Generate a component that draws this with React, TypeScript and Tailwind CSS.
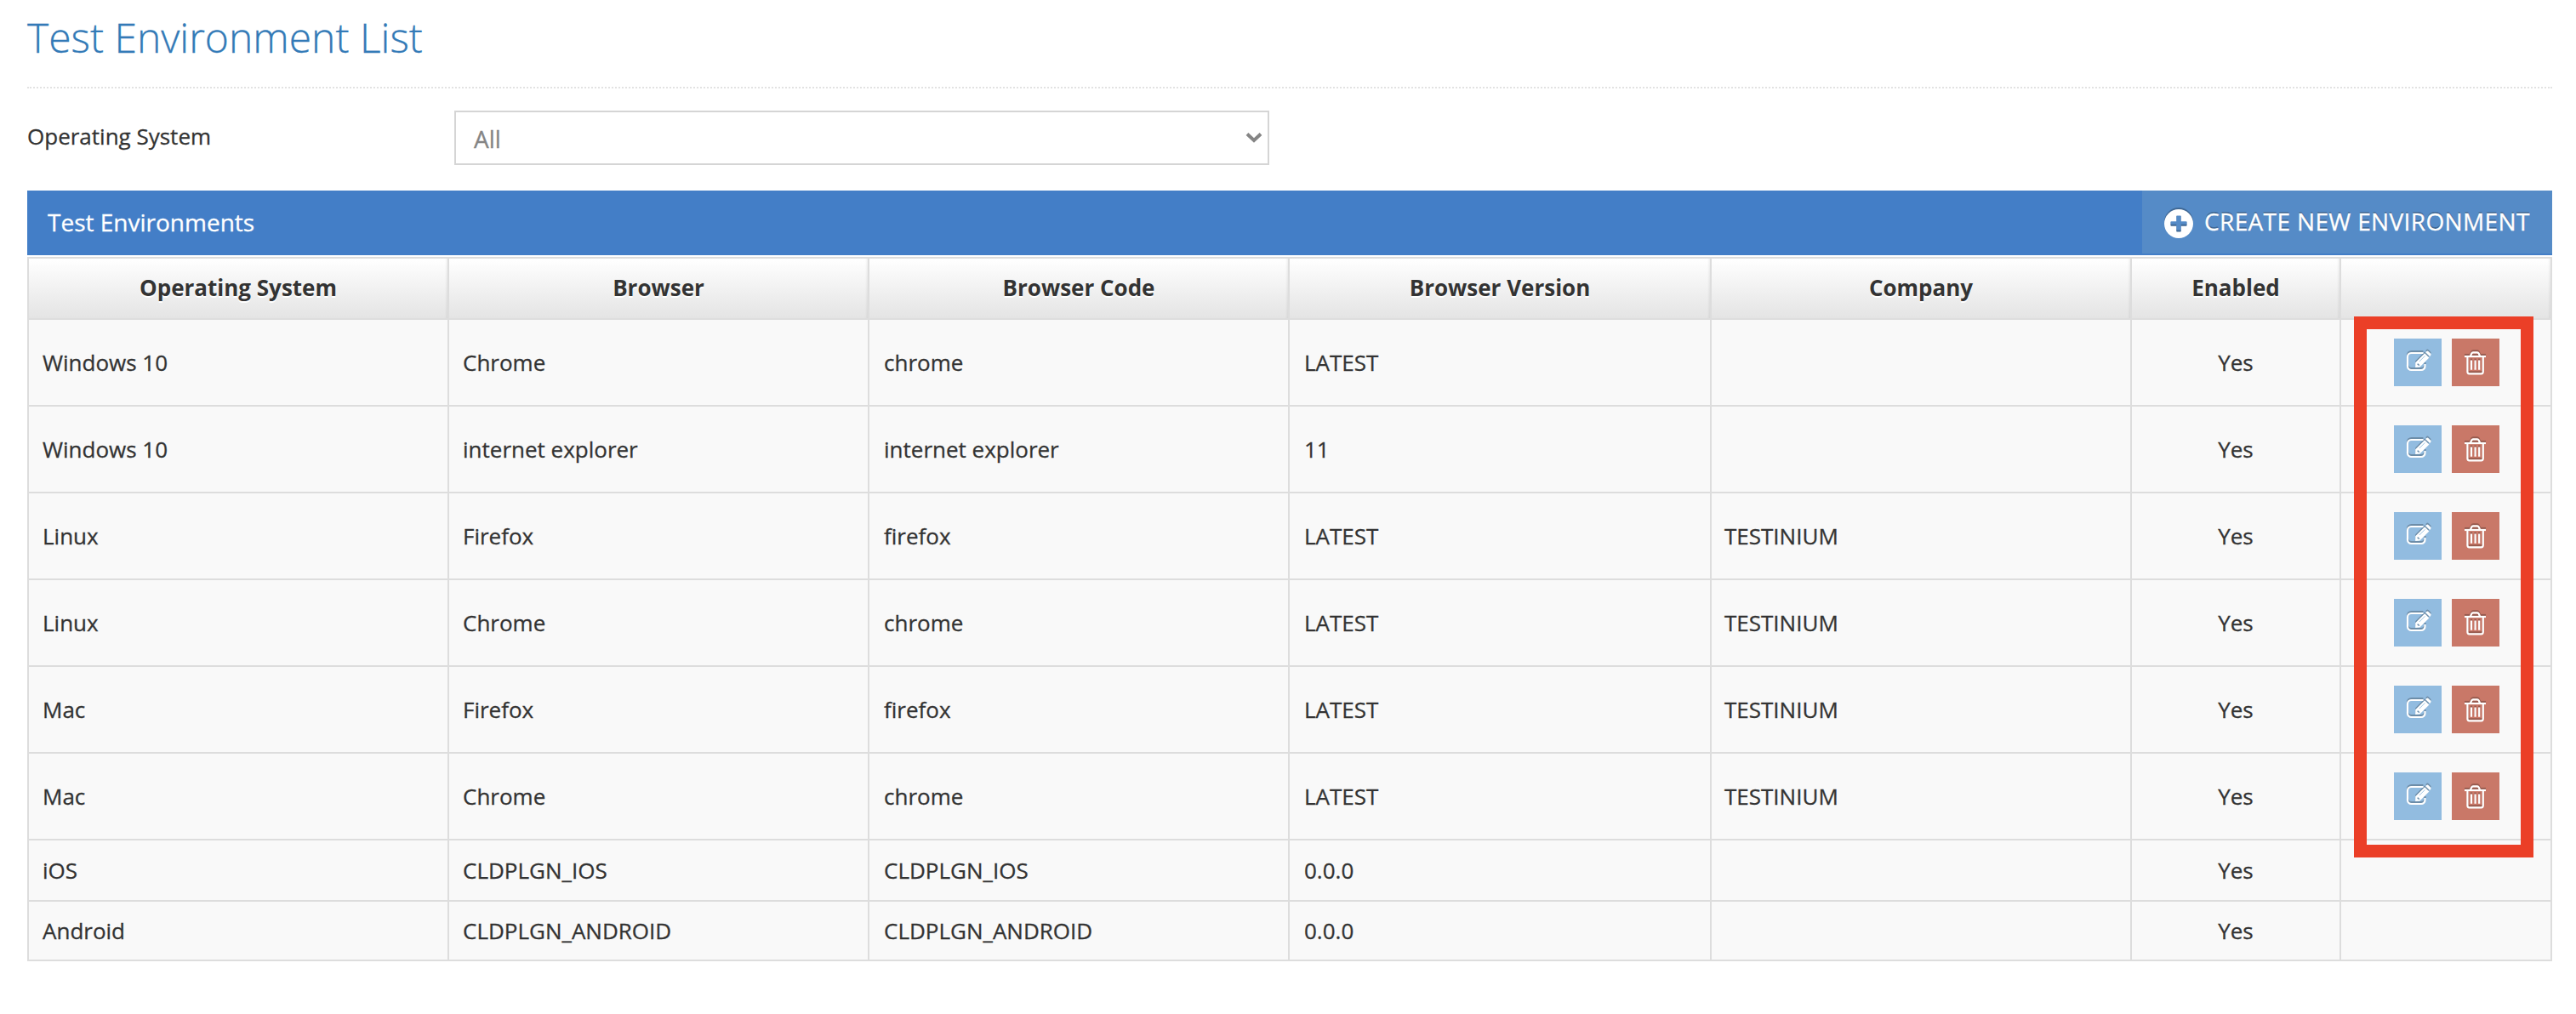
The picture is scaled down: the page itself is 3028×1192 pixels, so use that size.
import React from "react";

type Env = {
  os: string;
  browser: string;
  code: string;
  version: string;
  company: string;
  actions: boolean;
  height: string;
};

const TALL = "h-[102px]";

const environments: Env[] = [
  { os: "Windows 10", browser: "Chrome", code: "chrome", version: "LATEST", company: "", actions: true, height: TALL },
  { os: "Windows 10", browser: "internet explorer", code: "internet explorer", version: "11", company: "", actions: true, height: TALL },
  { os: "Linux", browser: "Firefox", code: "firefox", version: "LATEST", company: "TESTINIUM", actions: true, height: TALL },
  { os: "Linux", browser: "Chrome", code: "chrome", version: "LATEST", company: "TESTINIUM", actions: true, height: TALL },
  { os: "Mac", browser: "Firefox", code: "firefox", version: "LATEST", company: "TESTINIUM", actions: true, height: TALL },
  { os: "Mac", browser: "Chrome", code: "chrome", version: "LATEST", company: "TESTINIUM", actions: true, height: TALL },
  { os: "iOS", browser: "CLDPLGN_IOS", code: "CLDPLGN_IOS", version: "0.0.0", company: "", actions: false, height: "h-[72px]" },
  { os: "Android", browser: "CLDPLGN_ANDROID", code: "CLDPLGN_ANDROID", version: "0.0.0", company: "", actions: false, height: "h-[70px]" },
];

const headings = ["Operating System", "Browser", "Browser Code", "Browser Version", "Company", "Enabled", ""];

const iconShadow = "[filter:drop-shadow(0_-2px_0_rgba(0,0,0,0.25))]";

function EditIcon() {
  return (
    <svg viewBox="0 0 56 56" className={`size-14 ${iconShadow}`} fill="none">
      <path
        d="M34.5 17H20.5A4.5 4.5 0 0 0 16 21.500V32.500A4.500 4.500 0 0 0 20.500 37H32A4.500 4.500 0 0 0 36.500 32.500V30"
        stroke="#fff"
        strokeWidth="2.200"
      />
      <path
        fillRule="evenodd"
        fill="#fff"
        d="M25.200 34V28.200L36.200 17.200L41.400 22.400L30.400 33.400L25.200 34ZM28.200 29L30.600 31.400L29 32L27.200 30.200Z"
      />
      <path d="M29.800 27L36.500 20.300" stroke="#92bce0" strokeWidth="0.900" />
      <path d="M37.200 16.200L38.400 15Q39.400 14.200 40.400 15L43.200 17.800Q44 18.800 43.200 19.800L42.200 21Z" fill="#fff" />
    </svg>
  );
}

function TrashIcon() {
  return (
    <svg viewBox="0 0 56 56" className={`size-14 ${iconShadow}`} fill="none" stroke="#fff" strokeWidth="2.200">
      <path d="M15 21H40" />
      <path d="M22 20.500L23.300 17.400Q23.800 16.400 25 16.400H30Q31.200 16.400 31.700 17.400L33 20.500" />
      <path d="M18.400 21V38.800Q18.400 41.400 20.600 41.400H34.600Q36.800 41.400 36.800 38.800V21" />
      <path d="M23 25.500V36.800M27.600 25.500V36.800M32.200 25.500V36.800" />
    </svg>
  );
}

function PlusCircle() {
  return (
    <svg viewBox="0 0 34 34" className={`size-[34px] ${iconShadow}`}>
      <path
        fillRule="evenodd"
        fill="#fff"
        d="M17 0A17 17 0 1 1 17 34A17 17 0 1 1 17 0ZM15 7.400Q14.200 7.400 14.200 8.400V14.200H8.400Q7.400 14.200 7.400 15V19Q7.400 19.800 8.400 19.800H14.200V25.600Q14.200 26.600 15 26.600H19Q19.800 26.600 19.800 25.600V19.800H25.600Q26.600 19.800 26.600 19V15Q26.600 14.200 25.600 14.200H19.800V8.400Q19.800 7.400 19 7.400Z"
      />
    </svg>
  );
}

function Cell({ children, className = "pl-4" }: { children?: React.ReactNode; className?: string }) {
  return (
    <td className={`border-r-2 border-b-2 border-[#ddd] bg-[#f9f9f9] py-0 align-middle ${className}`}>
      {children}
    </td>
  );
}

export default function App() {
  return (
    <div className="h-[1192px] w-[3028px] overflow-hidden bg-white pr-7 pl-8 font-['Open_Sans',sans-serif] text-[26px] text-[#333] [-webkit-text-stroke:0.3px]">
      <header className="flex h-[104px] border-b-2 border-dotted border-[#e2e2e2]">
        <h1 className="pt-4 text-[48px] leading-[56px] font-light text-[#337ab7]">Test Environment List</h1>
      </header>

      <div className="mt-[26px] flex h-16">
        <label className="w-[502px] leading-[60px]">Operating System</label>
        <div className="flex h-16 w-[958px] items-center justify-between border-2 border-[#d5d5d5] pr-1.5 pl-[21px] text-[28px] text-[#858585]">
          <span className="pt-px">All</span>
          <svg viewBox="0 0 20 14" className="h-[14px] w-5" fill="none" stroke="#858585" strokeWidth="4">
            <path d="M2 2.500L10 10L18 2.500" />
          </svg>
        </div>
      </div>

      <section className="relative mt-[30px]">
        <div className="flex h-[76px] justify-between bg-[#437ec7] text-[28px] text-white">
          <h2 className="pl-6 leading-[74px]">Test Environments</h2>
          <button className="flex h-[74px] w-[482px] items-center bg-[#558bc7] pt-1 pl-[26px]">
            <PlusCircle />
            <span className="-mt-1.5 pl-[13px] tracking-[0.36px] whitespace-nowrap [text-shadow:0_-2px_0_rgba(0,0,0,0.25)]">
              CREATE NEW ENVIRONMENT
            </span>
          </button>
        </div>

        <table className="mt-0.5 w-[2968px] table-fixed border-separate border-spacing-0 border-t-2 border-l-2 border-[#ddd]">
          <colgroup>
            <col className="w-[494px]" />
            <col className="w-[494px]" />
            <col className="w-[494px]" />
            <col className="w-[496px]" />
            <col className="w-[494px]" />
            <col className="w-[246px]" />
            <col className="w-[248px]" />
          </colgroup>
          <thead>
            <tr className="h-[72px]">
              {headings.map((heading, i) => (
                <th
                  key={i}
                  className="border-r-2 border-b-2 border-[#ddd] bg-linear-to-b from-white to-[#e4e4e4] px-0 pt-0 pb-px text-center align-middle font-bold shadow-[inset_-3px_0_3px_-2px_rgba(0,0,0,0.08)] [-webkit-text-stroke:0] [text-shadow:0_2px_0_#fff]"
                >
                  {heading}
                </th>
              ))}
            </tr>
          </thead>
          <tbody>
            {environments.map((env, i) => (
              <tr key={i} className={env.height}>
                <Cell>{env.os}</Cell>
                <Cell>{env.browser}</Cell>
                <Cell className="pl-[17px]">{env.code}</Cell>
                <Cell className="pl-[17px]">{env.version}</Cell>
                <Cell className="pl-[15px]">{env.company}</Cell>
                <Cell className="text-center">Yes</Cell>
                <Cell className="pl-[62px]">
                  {env.actions && (
                    <div className="flex gap-3">
                      <button className="size-14 bg-[#92bce0]">
                        <EditIcon />
                      </button>
                      <button className="size-14 bg-[#c97868]">
                        <TrashIcon />
                      </button>
                    </div>
                  )}
                </Cell>
              </tr>
            ))}
          </tbody>
        </table>

        <div className="pointer-events-none absolute top-[148px] right-[22px] h-[636px] w-[211px] border-[15px] border-[#eb3f27]" />
      </section>
    </div>
  );
}
